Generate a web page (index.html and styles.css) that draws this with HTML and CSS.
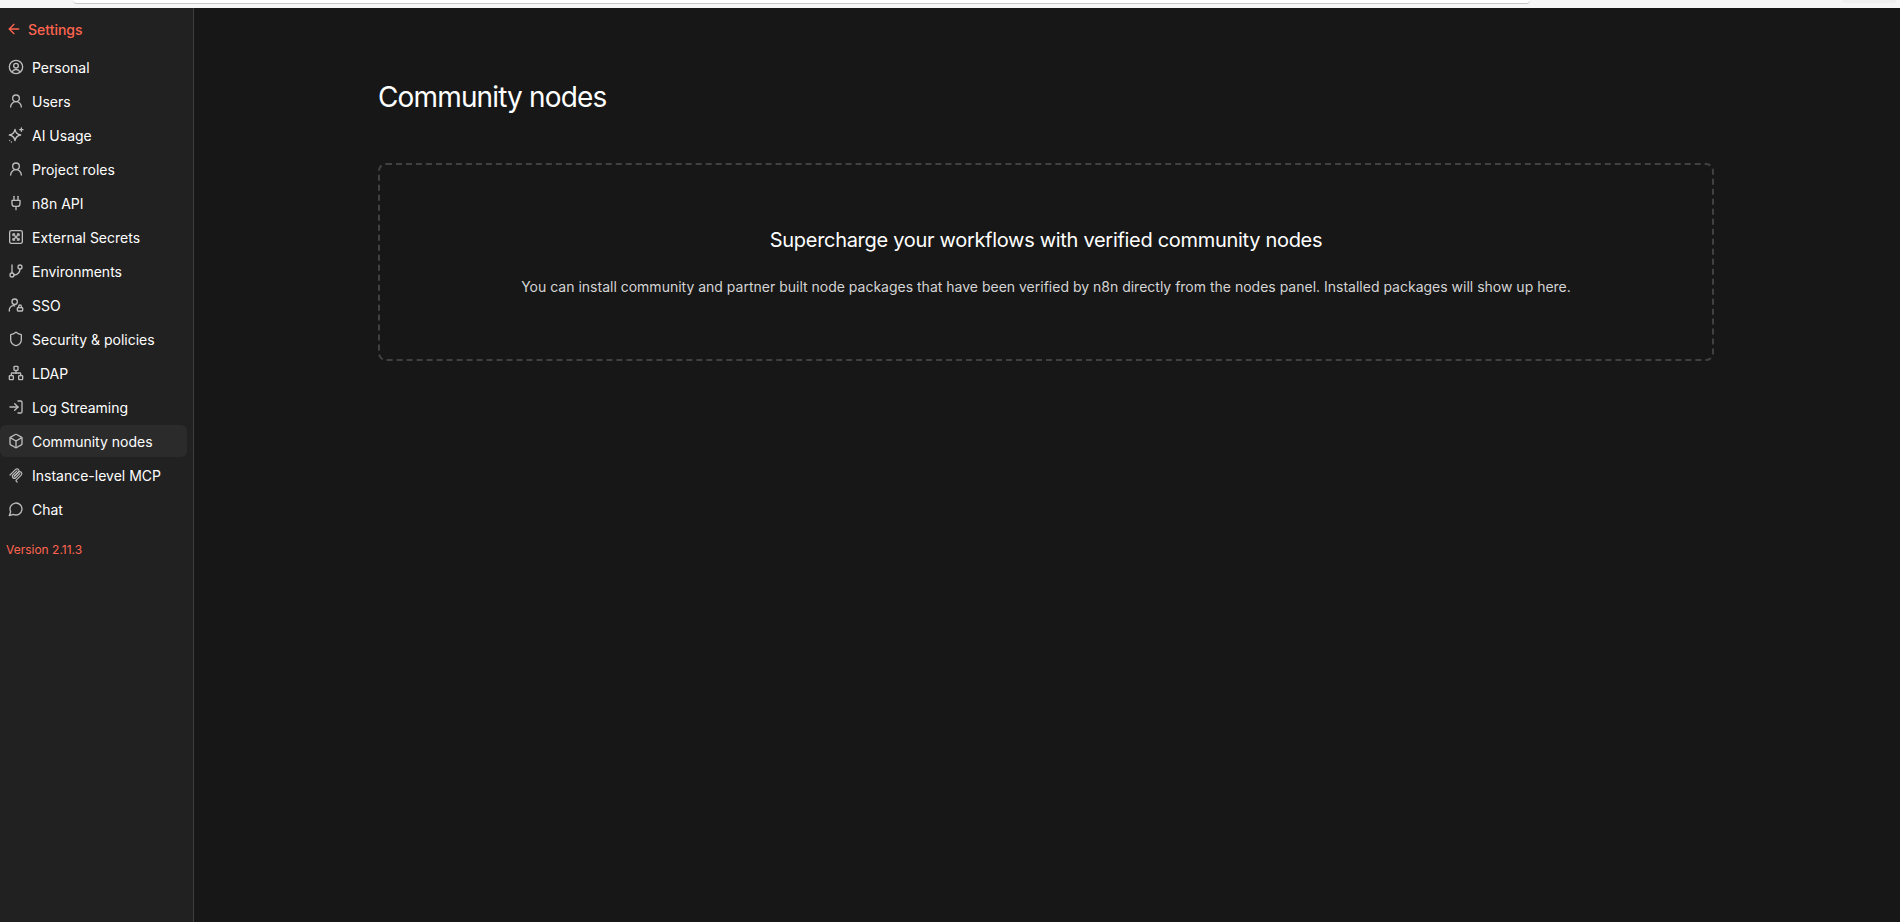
FILE: index.html
```html
<!DOCTYPE html>
<html lang="en">
<head>
<meta charset="utf-8">
<title>Community nodes</title>
<link rel="stylesheet" href="styles.css">
</head>
<body>
<div class="chrome">
  <div class="urlbar"></div>
  <div class="chrome-pill"></div>
</div>
<div class="app">
  <aside class="sidebar">
    <div class="back">
      <svg class="back-icon" viewBox="0 0 24 24"><path d="m12 19-7-7 7-7"/><path d="M19 12H5"/></svg>
      <span>Settings</span>
    </div>
    <nav class="menu">
      <a class="item"><svg class="icon" viewBox="0 0 24 24"><circle cx="12" cy="12" r="10"/><circle cx="12" cy="10" r="3.5"/><path d="M6 19.2a7 7 0 0 1 12 0"/></svg><span>Personal</span></a>
      <a class="item"><svg class="icon" viewBox="0 0 24 24"><circle cx="12" cy="8" r="5"/><path d="M20 21a8 8 0 0 0-16 0"/></svg><span>Users</span></a>
      <a class="item"><svg class="icon" viewBox="0 0 24 24"><path d="M10.500 3.500c.8 5 3.500 7.700 8.500 8.500-5 .8-7.700 3.500-8.500 8.500-.8-5-3.500-7.700-8.500-8.500 5-.8 7.700-3.500 8.500-8.500z"/><path d="M20 1.500v5M17.500 4h5"/><path d="M2.500 20h.01M5 22.500h.01"/></svg><span>AI Usage</span></a>
      <a class="item"><svg class="icon" viewBox="0 0 24 24"><circle cx="12" cy="8" r="5"/><path d="M20 21a8 8 0 0 0-16 0"/></svg><span>Project roles</span></a>
      <a class="item"><svg class="icon" viewBox="0 0 24 24"><path d="M12 22v-5"/><path d="M9 8V2"/><path d="M15 8V2"/><path d="M18 8v5a4 4 0 0 1-4 4h-4a4 4 0 0 1-4-4V8z"/></svg><span>n8n API</span></a>
      <a class="item"><svg class="icon" viewBox="0 0 24 24"><rect x="2.500" y="2.500" width="19" height="19" rx="2.500"/><path d="m8 8 8 8M16 8l-8 8"/><path d="M7.500 10V7.500H10M14 7.500h2.500V10M16.500 14v2.500H14M10 16.500H7.500V14"/></svg><span>External Secrets</span></a>
      <a class="item"><svg class="icon" viewBox="0 0 24 24"><path d="M6 3v12"/><circle cx="18" cy="6" r="3"/><circle cx="6" cy="18" r="3"/><path d="M18 9a9 9 0 0 1-9 9"/></svg><span>Environments</span></a>
      <a class="item"><svg class="icon" viewBox="0 0 24 24"><circle cx="10" cy="7" r="4"/><path d="M2 21v-2a6 6 0 0 1 8-5.600"/><rect x="14" y="16" width="8" height="5" rx="1"/><path d="M16 16v-2a2 2 0 0 1 4 0v2"/></svg><span>SSO</span></a>
      <a class="item"><svg class="icon" viewBox="0 0 24 24"><path d="M20 13c0 5-3.500 7.500-7.660 8.950a1 1 0 0 1-.67-.01C7.500 20.500 4 18 4 13V6a1 1 0 0 1 1-1c2 0 4.500-1.200 6.240-2.720a1.170 1.170 0 0 1 1.520 0C14.510 3.810 17 5 19 5a1 1 0 0 1 1 1z"/></svg><span>Security &amp; policies</span></a>
      <a class="item"><svg class="icon" viewBox="0 0 24 24"><rect x="16" y="16" width="6" height="6" rx="1"/><rect x="2" y="16" width="6" height="6" rx="1"/><rect x="9" y="2" width="6" height="6" rx="1"/><path d="M5 16v-3a1 1 0 0 1 1-1h12a1 1 0 0 1 1 1v3"/><path d="M12 12V8"/></svg><span>LDAP</span></a>
      <a class="item"><svg class="icon" viewBox="0 0 24 24"><path d="M15 3h4a2 2 0 0 1 2 2v14a2 2 0 0 1-2 2h-4"/><path d="m10 17 5-5-5-5"/><path d="M15 12H3"/></svg><span>Log Streaming</span></a>
      <a class="item active"><svg class="icon" viewBox="0 0 24 24"><path d="M21 8a2 2 0 0 0-1-1.730l-7-4a2 2 0 0 0-2 0l-7 4A2 2 0 0 0 3 8v8a2 2 0 0 0 1 1.730l7 4a2 2 0 0 0 2 0l7-4A2 2 0 0 0 21 16z"/><path d="m3.300 7 8.700 5 8.700-5"/><path d="M12 22V12"/></svg><span>Community nodes</span></a>
      <a class="item"><svg class="icon icon-mcp" viewBox="0 0 195 195"><path d="M25 97.850 92.880 29.970c9.370-9.370 24.570-9.370 33.940 0 9.370 9.370 9.370 24.570 0 33.940L75.560 115.180"/><path d="M76.270 114.470 126.820 63.910c9.370-9.370 24.570-9.370 33.940 0l.36.360c9.370 9.370 9.370 24.570 0 33.940L99.720 159.600c-3.120 3.120-3.120 8.190 0 11.310l12.610 12.610"/><path d="M109.850 46.940 59.650 97.150c-9.370 9.370-9.370 24.570 0 33.940 9.370 9.370 24.570 9.370 33.940 0l50.200-50.210"/></svg><span>Instance-level MCP</span></a>
      <a class="item"><svg class="icon" viewBox="0 0 24 24"><path d="M7.900 20A9 9 0 1 0 4 16.100L2 22z"/></svg><span>Chat</span></a>
    </nav>
    <div class="version">Version 2.11.3</div>
  </aside>
  <main class="main">
    <h1 class="title">Community nodes</h1>
    <section class="empty">
      <h2 class="empty-title">Supercharge your workflows with verified community nodes</h2>
      <p class="empty-text">You can install community and partner built node packages that have been verified by n8n directly from the nodes panel. Installed packages will show up here.</p>
    </section>
  </main>
</div>
</body>
</html>
```
FILE: styles.css
```css
* { box-sizing: border-box; }
html, body { margin: 0; height: 100%; }
body {
  display: flex;
  flex-direction: column;
  height: 922px;
  overflow: hidden;
  background: #171717;
  color: #fff;
  font-family: Inter, "Liberation Sans", sans-serif;
}
.chrome {
  flex: 0 0 8px;
  background: #f6f6f6;
  display: flex;
  justify-content: space-between;
  padding-left: 73px;
  padding-right: 4px;
  overflow: hidden;
}
.urlbar {
  width: 1457px;
  height: 4px;
  background: #fff;
  border-bottom: 1px solid #c8c8c8;
  border-radius: 0 0 8px 8px;
}
.chrome-pill {
  width: 54px;
  height: 3px;
  background: #efefef;
  border-radius: 0 0 6px 6px;
}
.app { flex: 1; display: flex; min-height: 0; }
.sidebar {
  flex: 0 0 194px;
  background: #212121;
  border-right: 1px solid #3d3d3d;
  padding-top: 11px;
}
.back {
  display: flex;
  align-items: center;
  gap: 6px;
  height: 20px;
  padding-left: 6px;
  color: #ff6550;
  font-size: 14px;
  font-weight: 500;
}
.back-icon {
  width: 16px;
  height: 16px;
  fill: none;
  stroke: currentColor;
  stroke-width: 2;
  stroke-linecap: round;
  stroke-linejoin: round;
}
.menu {
  display: flex;
  flex-direction: column;
  gap: 2px;
  width: 187px;
  margin-top: 12px;
}
.item {
  display: flex;
  align-items: center;
  gap: 8px;
  height: 32px;
  padding-left: 8px;
  border-radius: 6px;
  color: #fff;
  font-size: 14px;
  font-weight: 400;
  white-space: nowrap;
}
.item.active { background: #2b2b2b; }
.icon {
  flex: 0 0 16px;
  width: 16px;
  height: 16px;
  fill: none;
  stroke: #bdbdbd;
  stroke-width: 2;
  stroke-linecap: round;
  stroke-linejoin: round;
}
.icon-mcp { stroke-width: 14; }
.version {
  margin-top: 17px;
  padding-left: 6px;
  color: #ff6550;
  font-size: 12px;
}
.main {
  flex: 1;
  padding: 73px 186px 0 184px;
  min-width: 0;
}
.title {
  margin: 0;
  height: 33px;
  font-size: 28px;
  line-height: 33px;
  font-weight: 400;
  letter-spacing: -0.85px;
}
.empty {
  margin-top: 49px;
  height: 198px;
  border: 2px dashed #414141;
  border-radius: 8px;
  text-align: center;
  padding-top: 63px;
}
.empty-title {
  margin: 0;
  font-size: 20px;
  line-height: 24px;
  font-weight: 400;
  letter-spacing: -0.3px;
}
.empty-text {
  margin: 25px 0 0;
  color: #d4d4d4;
  font-size: 14px;
  line-height: 20px;
}
```
